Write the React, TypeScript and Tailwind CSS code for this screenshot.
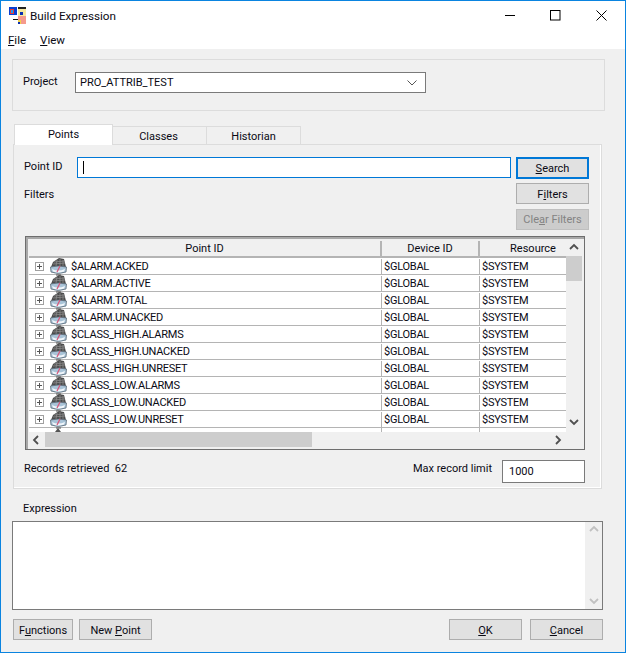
import React from 'react';

const points = [
  '$ALARM.ACKED',
  '$ALARM.ACTIVE',
  '$ALARM.TOTAL',
  '$ALARM.UNACKED',
  '$CLASS_HIGH.ALARMS',
  '$CLASS_HIGH.UNACKED',
  '$CLASS_HIGH.UNRESET',
  '$CLASS_LOW.ALARMS',
  '$CLASS_LOW.UNACKED',
  '$CLASS_LOW.UNRESET',
];

function AppIcon() {
  return (
    <svg width="17" height="17" viewBox="0 0 17 17" className="shrink-0">
      <rect x="0" y="0" width="8" height="8" fill="#0a3fd0" />
      <rect x="1" y="2" width="4" height="5" fill="#e23b3b" />
      <rect x="2" y="3" width="2" height="3" fill="#1d9bf0" />
      <rect x="9" y="1" width="8" height="8" fill="#f6e9a0" />
      <rect x="9" y="0" width="8" height="2" fill="#222" />
      <rect x="11" y="5" width="3" height="3" fill="#0a2fb0" />
      <rect x="4" y="12" width="7" height="1" fill="#111" />
      <rect x="9" y="9" width="8" height="8" fill="#f59a8c" />
      <rect x="9" y="13" width="3" height="4" fill="#f2d24a" />
      <rect x="9" y="15" width="2" height="2" fill="#0a2fb0" />
    </svg>
  );
}

function PointIcon({ clip }: { clip?: boolean }) {
  return (
    <svg width="17" height={clip ? 4 : 19} viewBox={clip ? '0 0 17 4' : '0 0 17 19'} className="shrink-0">
      {!clip && (
        <>
          <path d="M1 10 L3 5 L9 1 L14 2 L16 10 Z" fill="#4c4c4c" />
          <path d="M4 5 L14 4 M3 7 L15 6 M7 3 L6 9 M10 2 L10 9 M13 3 L13 9" stroke="#8c8c8c" strokeWidth="0.8" fill="none" />
          <path d="M0.5 10 Q8 8 16.5 10 L16 15 Q8 18 1 15 Z" fill="#a9c4d8" stroke="#5a6a76" strokeWidth="0.8" />
          <path d="M2 12 Q8 15 15 12 L14 14.5 Q8 16.5 3 14.5 Z" fill="#f2f7fb" />
          <path d="M7 15 L10 9" stroke="#d8577a" strokeWidth="1.2" />
          <path d="M6 18 H11" stroke="#555" strokeWidth="1" />
        </>
      )}
      {clip && <path d="M8 0 L11 4 H5 Z" fill="#555" />}
    </svg>
  );
}

function Chevron({ dir, color = '#505050' }: { dir: 'up' | 'down' | 'left' | 'right'; color?: string }) {
  const d = {
    up: 'M1 6 L5 2 L9 6',
    down: 'M1 3 L5 7 L9 3',
    left: 'M6 1 L2 5 L6 9',
    right: 'M3 1 L7 5 L3 9',
  }[dir];
  return (
    <svg width="10" height="10" viewBox="0 0 10 10">
      <path d={d} fill="none" stroke={color} strokeWidth="1.8" />
    </svg>
  );
}

function Btn({ children, className = '' }: { children: React.ReactNode; className?: string }) {
  return (
    <div className={`flex h-[21px] items-center justify-center border border-[#adadad] bg-[#e1e1e1] ${className}`}>
      <span>{children}</span>
    </div>
  );
}

function ExpandBox() {
  return (
    <svg width="9" height="9" viewBox="0 0 9 9" className="shrink-0">
      <rect x="0.5" y="0.5" width="8" height="8" fill="#fff" stroke="#a0a0a0" />
      <path d="M2 4.5 H7 M4.5 2 V7" stroke="#555" />
    </svg>
  );
}

export default function App() {
  return (
    <div className="flex h-[653px] w-[626px] flex-col overflow-hidden border border-[#0a84e0] bg-[#f0f0f0] font-['Roboto',sans-serif] text-[11px] leading-none text-[#0a0a14]">
      {/* title + menu */}
      <div className="bg-white">
        <div className="flex h-[29px] items-center pl-[8px]">
          <AppIcon />
          <span className="ml-[4px] pt-[2px] text-[11.7px]">Build Expression</span>
          <div className="ml-auto flex items-center">
            <svg width="11" height="11" viewBox="0 0 11 11" className="mr-[34px]">
              <path d="M0 5.5 H10" stroke="#000" />
            </svg>
            <svg width="11" height="11" viewBox="0 0 11 11" className="mr-[35px]">
              <rect x="0.5" y="0.5" width="9.5" height="9.5" fill="none" stroke="#000" />
            </svg>
            <svg width="11" height="11" viewBox="0 0 11 11" className="mr-[18px]">
              <path d="M0.5 0.5 L10.5 10.5 M10.5 0.5 L0.5 10.5" stroke="#000" />
            </svg>
          </div>
        </div>
        <div className="flex h-[19px] items-center pl-[7px] pt-[2px] text-[11.5px]">
          <span>
            <u>F</u>ile
          </span>
          <span className="ml-[14px]">
            <u>V</u>iew
          </span>
        </div>
      </div>

      <div className="pl-[11px]">
        {/* project */}
        <div className="mt-[10px] flex h-[52px] w-[593px] items-start border border-[#dcdcdc] pl-[10px] pt-[12px]">
          <span className="mt-[4px] w-[52px]">Project</span>
          <div className="flex h-[21px] w-[351px] items-center justify-between border border-[#7a7a7a] bg-white pl-[4px] pr-[8px]">
            <span>PRO_ATTRIB_TEST</span>
            <svg width="10" height="6" viewBox="0 0 10 6">
              <path d="M0.5 0.5 L5 5 L9.5 0.5" fill="none" stroke="#555" />
            </svg>
          </div>
        </div>

        {/* tabs */}
        <div className="ml-[2px] mt-[13px] flex h-[21px] items-end">
          <div className="relative z-10 flex h-[21px] w-[99px] items-center justify-center border-x border-t border-[#dcdcdc] bg-white pb-[1px]">
            Points
          </div>
          <div className="flex h-[19px] w-[94px] items-center justify-center border-r border-t border-[#dcdcdc] pr-[2px] pt-[1px]">
            Classes
          </div>
          <div className="flex h-[19px] w-[94px] items-center justify-center border-r border-t border-[#dcdcdc] pt-[1px]">
            Historian
          </div>
        </div>

        {/* tab panel */}
        <div className="-mt-[1px] ml-[1px] h-[345px] w-[589px] border border-[#dcdcdc] pl-[10px] pt-[12px] shadow-[inset_-1px_-1px_0_#fff]">
          <div className="w-[565px]">
            <div className="flex items-start">
              <span className="mt-[4px] w-[53px]">Point ID</span>
              <div className="flex h-[21px] w-[434px] items-center border border-[#0078d7] bg-white pl-[5px]">
                <div className="h-[13px] w-px bg-black" />
              </div>
              <div className="ml-[5px] flex h-[22px] w-[73px] items-center justify-center border-2 border-[#0078d7] bg-[#e1e1e1] pt-[1px]">
                <span>
                  <u>S</u>earch
                </span>
              </div>
            </div>
            <div className="mt-[4px] flex items-start justify-between">
              <span className="mt-[6px]">Filters</span>
              <Btn className="w-[73px] pt-[1px]">
                F<u>i</u>lters
              </Btn>
            </div>
            <div className="mt-[5px] flex justify-end">
              <div className="flex h-[21px] w-[73px] items-center justify-center border border-[#bfbfbf] bg-[#cccccc] text-[#838383]">
                <span>
                  Cle<u>a</u>r Filters
                </span>
              </div>
            </div>

            {/* grid */}
            <div className="ml-[1px] mt-[6px] h-[214px] w-[560px] border border-[#6e6e6e]">
              <div className="h-[212px] border-l-2 border-t-2 border-[#a8a8a8] pl-[1px] pt-[1px]">
                <div className="flex">
                  <div className="w-[537px] bg-white tracking-[-0.25px]">
                    <div className="flex h-[18px] bg-[#f0f0f0] pt-[1px] tracking-normal">
                      <div className="flex w-[353px] items-center justify-center border-b-2 border-r-2 border-[#b4b4b4]">Point ID</div>
                      <div className="flex w-[98px] items-center justify-center border-b-2 border-r-2 border-[#b4b4b4]">Device ID</div>
                      <div className="flex w-[86px] items-center justify-center border-b-2 border-[#b4b4b4] pl-[20px]">Resource</div>
                    </div>
                    {points.map((p) => (
                      <div key={p} className="flex h-[17px] border-b border-[#b4b4b4] pt-[1px]">
                        <div className="flex w-[353px] items-center border-r border-[#b4b4b4] pl-[6px]">
                          <ExpandBox />
                          <div className="ml-[6px] flex h-[15px] w-[17px] items-center overflow-visible">
                            <PointIcon />
                          </div>
                          <span className="ml-[4px]">{p}</span>
                        </div>
                        <div className="flex w-[98px] items-center border-r border-[#b4b4b4] pl-[2px]">$GLOBAL</div>
                        <div className="flex w-[86px] items-center pl-[2px]">$SYSTEM</div>
                      </div>
                    ))}
                    <div className="flex h-[4px] overflow-hidden">
                      <div className="w-[353px] border-r border-[#b4b4b4] pl-[21px]">
                        <PointIcon clip />
                      </div>
                      <div className="w-[98px] border-r border-[#b4b4b4]" />
                    </div>
                  </div>
                  {/* vertical scrollbar */}
                  <div className="flex h-[191px] w-[16px] flex-col items-center">
                    <div className="flex h-[16px] items-center">
                      <Chevron dir="up" />
                    </div>
                    <div className="h-[25px] w-full bg-[#cdcdcd]" />
                    <div className="mt-auto flex h-[18px] items-center">
                      <Chevron dir="down" />
                    </div>
                  </div>
                </div>
                {/* horizontal scrollbar */}
                <div className="flex h-[15px] w-[537px] items-center">
                  <div className="flex w-[16px] justify-center">
                    <Chevron dir="left" />
                  </div>
                  <div className="h-[15px] w-[267px] bg-[#cdcdcd]" />
                  <div className="ml-auto flex w-[17px] justify-center">
                    <Chevron dir="right" />
                  </div>
                </div>
              </div>
            </div>

            <div className="mt-[10px] flex h-[23px] items-start">
              <span className="mt-[3px]">Records retrieved&nbsp;&nbsp;62</span>
              <span className="ml-auto mt-[3px]">Max record limit</span>
              <div className="ml-[10px] mr-[4px] flex h-[23px] w-[83px] items-center border border-[#7a7a7a] bg-white pl-[6px]">1000</div>
            </div>
          </div>
        </div>

        {/* expression */}
        <div className="ml-[11px] mt-[11px] flex h-[16px] items-center">Expression</div>
        <div className="mt-[5px] flex h-[89px] w-[591px] border border-[#7a7a7a] bg-white">
          <div className="ml-auto flex h-full w-[17px] flex-col items-center justify-between bg-[#f0f0f0] py-[3px]">
            <Chevron dir="up" color="#c0c0c0" />
            <Chevron dir="down" color="#c0c0c0" />
          </div>
        </div>

        {/* bottom buttons */}
        <div className="ml-[1px] mt-[9px] flex w-[590px]">
          <Btn className="w-[60px] pt-[1px]">
            F<u>u</u>nctions
          </Btn>
          <Btn className="ml-[6px] w-[73px] pt-[1px]">
            New <u>P</u>oint
          </Btn>
          <Btn className="ml-auto w-[73px] pt-[1px]">
            <u>O</u>K
          </Btn>
          <Btn className="ml-[8px] w-[73px] pt-[1px]">
            <u>C</u>ancel
          </Btn>
        </div>
      </div>
    </div>
  );
}
